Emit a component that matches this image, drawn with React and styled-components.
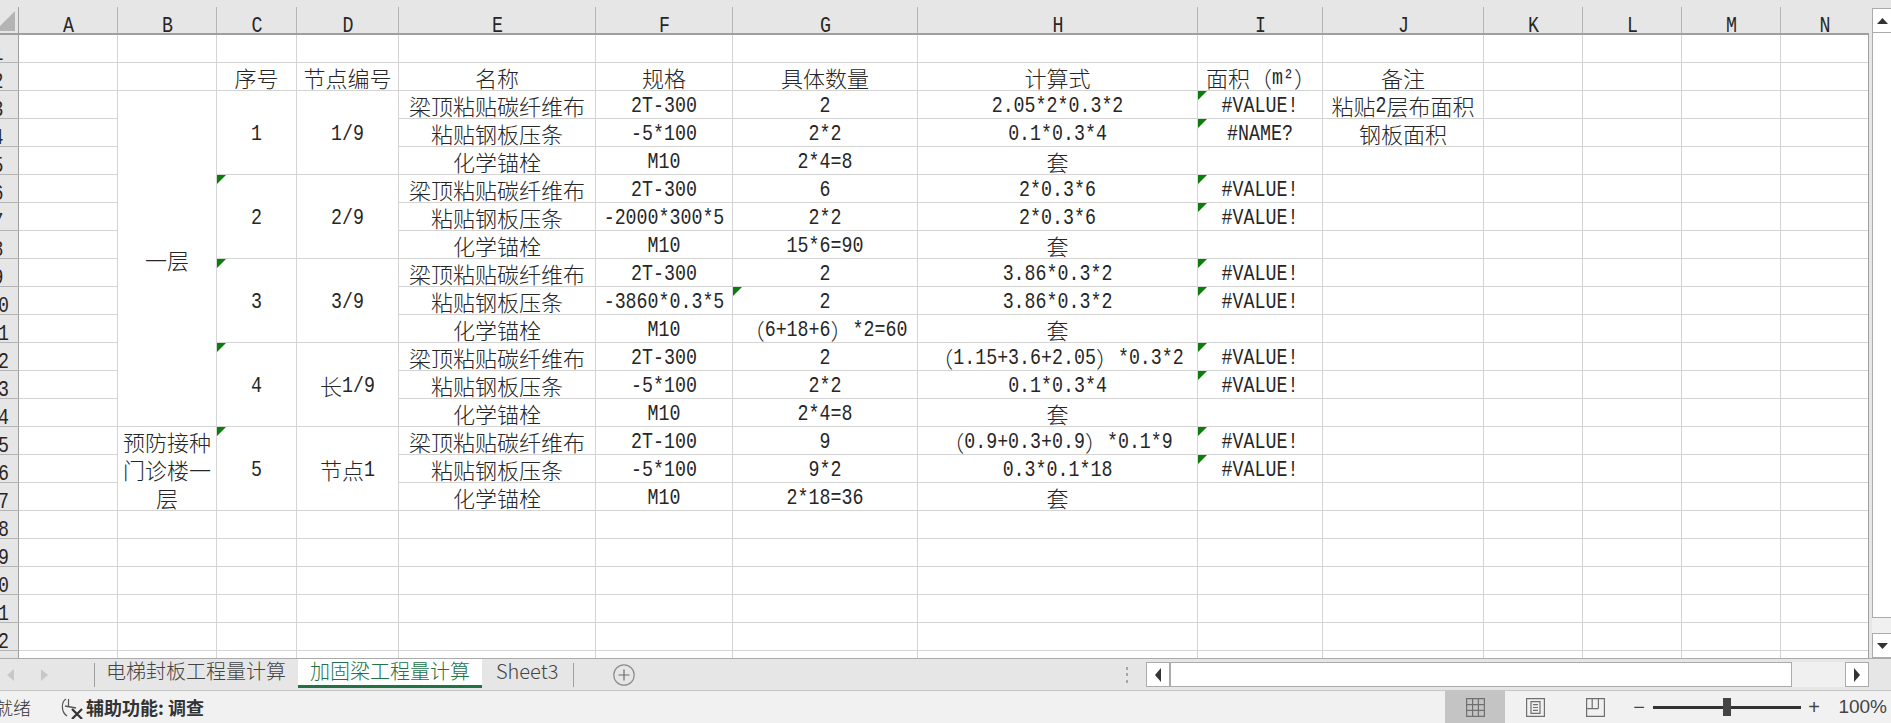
import React from "react";
import styled, { createGlobalStyle } from "styled-components";

const columns = [
	["A", 99], ["B", 99], ["C", 80], ["D", 102], ["E", 197], ["F", 137], ["G", 185],
	["H", 280], ["I", 125], ["J", 161], ["K", 99], ["L", 99], ["M", 99], ["N", 88]
];

// 每个节点三行：规格 具体数量 计算式 面积 备注
const nodes = [
	{ no: "1", code: "1/9", rows: [
		["2T-300", "2", "2.05*2*0.3*2", "#VALUE!", "粘贴2层布面积"],
		["-5*100", "2*2", "0.1*0.3*4", "#NAME?", "钢板面积"],
		["M10", "2*4=8", "套", "", ""]
	] },
	{ no: "2", code: "2/9", mark: true, rows: [
		["2T-300", "6", "2*0.3*6", "#VALUE!", ""],
		["-2000*300*5", "2*2", "2*0.3*6", "#VALUE!", ""],
		["M10", "15*6=90", "套", "", ""]
	] },
	{ no: "3", code: "3/9", mark: true, rows: [
		["2T-300", "2", "3.86*0.3*2", "#VALUE!", ""],
		["-3860*0.3*5", "2", "3.86*0.3*2", "#VALUE!", "", true],
		["M10", "（6+18+6）*2=60", "套", "", ""]
	] },
	{ no: "4", code: "长1/9", mark: true, rows: [
		["2T-300", "2", "（1.15+3.6+2.05）*0.3*2", "#VALUE!", ""],
		["-5*100", "2*2", "0.1*0.3*4", "#VALUE!", ""],
		["M10", "2*4=8", "套", "", ""]
	] },
	{ no: "5", code: "节点1", mark: true, rows: [
		["2T-100", "9", "（0.9+0.3+0.9）*0.1*9", "#VALUE!", ""],
		["-5*100", "9*2", "0.3*0.1*18", "#VALUE!", ""],
		["M10", "2*18=36", "套", "", ""]
	] }
];

const names = ["梁顶粘贴碳纤维布", "粘贴钢板压条", "化学锚栓"];
const tailCols = ["K", "L", "M", "N"];
const header = ["", "", "序号", "节点编号", "名称", "规格", "具体数量", "计算式", "面积（m²）", "备注", "", "", "", ""];

const GlobalStyle = createGlobalStyle`
	html, body {
		margin: 0;
		padding: 0;
		background: #e6e6e6;
		overflow: hidden;
	}
`;

const Page = styled.div`
	width: 1891px;
	height: 723px;
	display: flex;
	flex-direction: column;
	overflow: hidden;
	font-family: "Noto Sans CJK SC", sans-serif;
	color: #262626;
`;

const SheetArea = styled.div`
	height: 658px;
	flex: none;
	display: flex;
	overflow: hidden;
	background: #e6e6e6;
`;

const SheetGrid = styled.div`
	width: 1869px;
	flex: none;
	position: relative;
	display: grid;
	grid-template-columns: 19px ${columns.map(c => c[1] + "px").join(" ")};
	grid-template-rows: 35px repeat(23, 28px);
	background: #fff;
	font-size: 22px;
	font-weight: 300;
	&::after {
		content: "";
		position: absolute;
		top: 35px;
		bottom: 0;
		right: 0;
		width: 1px;
		background: #9f9f9f;
	}
`;

const Corner = styled.div`
	background: #e6e6e6;
	border-bottom: 2px solid #9f9f9f;
	box-sizing: border-box;
	position: relative;
	overflow: hidden;
	&::before {
		content: "";
		position: absolute;
		top: 7px;
		bottom: 0;
		right: 0;
		width: 1px;
		background: #9f9f9f;
	}
	&::after {
		content: "";
		position: absolute;
		right: 4px;
		bottom: 2px;
		border-style: solid;
		border-width: 0 0 20px 20px;
		border-color: transparent transparent #b4b4b4 transparent;
	}
`;

const ColHead = styled.div`
	background: #e6e6e6;
	border-bottom: 2px solid #9f9f9f;
	box-sizing: border-box;
	display: flex;
	align-items: center;
	justify-content: center;
	padding-top: 15px;
	line-height: 18px;
	position: relative;
	&::after {
		content: "";
		position: absolute;
		top: 7px;
		bottom: 0;
		right: 0;
		width: 1px;
		background: #b4b4b4;
	}
	&:nth-child(15)::after {
		display: none;
	}
`;

const RowHead = styled.div`
	background: #e6e6e6;
	border-right: 1px solid #9f9f9f;
	border-bottom: 1px solid #b4b4b4;
	box-sizing: border-box;
	overflow: hidden;
	line-height: 26px;
	white-space: nowrap;
`;

const RowNumber = styled.div`
	width: 40px;
	margin-left: -22px;
	text-align: center;
`;

const Cell = styled.div`
	border-right: 1px solid #d4d4d4;
	border-bottom: 1px solid #d4d4d4;
	box-sizing: border-box;
	position: relative;
	display: flex;
	align-items: center;
	justify-content: ${p => (p.$left ? "flex-start" : "center")};
	padding-left: ${p => (p.$left ? "8px" : "0")};
	padding-top: 1px;
	line-height: 28px;
	text-align: center;
	white-space: ${p => (p.$wrap ? "normal" : "nowrap")};
	grid-row: ${p => (p.$span ? `span ${p.$span}` : "auto")};
`;

const Mark = styled.span`
	position: absolute;
	top: 0;
	left: 0;
	border-style: solid;
	border-width: 9px 9px 0 0;
	border-color: #0a7d0a transparent transparent transparent;
`;

// 宋体的西文是半角等宽，用等宽字体纵向拉高来接近
const Latin = styled.span`
	display: inline-block;
	font-family: "Liberation Mono", monospace;
	font-size: 18.3px;
	font-weight: 400;
	transform: translateY(2.5px) scaleY(1.22);
	transform-origin: 50% 72%;
`;

const VBar = styled.div`
	flex: 1;
	margin-left: 3px;
	margin-top: 8px;
	display: flex;
	flex-direction: column;
	background: #f0f0f0;
`;

const VButton = styled.div`
	height: 25px;
	flex: none;
	display: flex;
	align-items: center;
	justify-content: center;
	background: #fff;
	border: 1px solid #ababab;
	border-right: none;
	box-sizing: border-box;
`;

const VThumb = styled.div`
	height: 585px;
	flex: none;
	background: #fff;
	border: 1px solid #ababab;
	border-top: none;
	border-right: none;
	box-sizing: border-box;
`;

const VTrack = styled.div`
	flex: 1;
`;

const TabBar = styled.div`
	height: 33px;
	flex: none;
	display: flex;
	align-items: flex-start;
	box-sizing: border-box;
	border-top: 1px solid #ababab;
	border-bottom: 1px solid #c6c6c6;
	background: #e6e6e6;
`;

const TabNav = styled.div`
	width: 95px;
	height: 24px;
	margin-top: 4px;
	display: flex;
	align-items: center;
	gap: 27px;
	padding-left: 7px;
	box-sizing: border-box;
	border-right: 1px solid #9f9f9f;
	flex: none;
`;

const Tab = styled.div`
	height: ${p => (p.$active ? "29px" : "24px")};
	margin-top: ${p => (p.$active ? "0" : "4px")};
	box-sizing: border-box;
	padding: ${p => p.$pad};
	width: ${p => p.$width};
	flex: none;
	background: ${p => (p.$active ? "#fff" : "transparent")};
	color: ${p => (p.$active ? "#217346" : "#444")};
	border-bottom: ${p => (p.$active ? "3px solid #217346" : "none")};
	border-right: ${p => (p.$line ? "1px solid #9f9f9f" : "none")};
	font-size: 20px;
	font-weight: 300;
	line-height: ${p => (p.$active ? "24px" : "16px")};
	white-space: nowrap;
`;

const AddSheet = styled.div`
	width: 22px;
	height: 22px;
	margin: 5px 0 0 39px;
	flex: none;
	display: flex;
`;

const HScrollArea = styled.div`
	margin-left: auto;
	width: 774px;
	flex: none;
	height: 25px;
	margin-top: 3px;
	display: flex;
	align-items: center;
`;

const Grip = styled.div`
	width: 20px;
	height: 16px;
	margin-right: 9px;
	flex: none;
	display: flex;
	flex-direction: column;
	justify-content: space-between;
	align-items: center;
`;

const GripDot = styled.span`
	width: 2px;
	height: 3px;
	background: #a6a6a6;
`;

const HButton = styled.div`
	width: 24px;
	height: 25px;
	box-sizing: border-box;
	background: #fff;
	border: 1px solid #ababab;
	display: flex;
	align-items: center;
	justify-content: center;
	flex: none;
`;

const HThumb = styled.div`
	width: 622px;
	height: 25px;
	box-sizing: border-box;
	background: #fff;
	border: 1px solid #ababab;
	flex: none;
`;

const HTrack = styled.div`
	width: 53px;
	height: 25px;
	background: #f0f0f0;
	flex: none;
`;

const StatusBar = styled.div`
	flex: 1;
	display: flex;
	align-items: stretch;
	background: #f1f1f1;
	color: #333;
	font-size: 18px;
`;

const StatusText = styled.div`
	margin-left: -5px;
	width: 66px;
	flex: none;
	font-weight: 300;
	line-height: 32px;
	white-space: nowrap;
`;

const Accessibility = styled.div`
	display: flex;
	align-items: center;
	gap: 3px;
	font-weight: 700;
	white-space: nowrap;
`;

const ViewGroup = styled.div`
	margin-left: auto;
	display: flex;
	align-items: stretch;
`;

const ViewButton = styled.div`
	width: 60px;
	display: flex;
	align-items: center;
	justify-content: center;
	background: ${p => (p.$active ? "#c4c4c4" : "transparent")};
`;

const Zoom = styled.div`
	width: 266px;
	flex: none;
	display: flex;
	align-items: center;
	padding-left: 7px;
	box-sizing: border-box;
`;

const ZoomSign = styled.span`
	width: 14px;
	flex: none;
	text-align: center;
	font-family: "Liberation Sans", sans-serif;
	font-size: 20px;
	line-height: 1;
	color: #444;
`;

const ZoomTrack = styled.div`
	width: 148px;
	height: 3px;
	margin: 0 6px 0 7px;
	flex: none;
	background: #333;
	position: relative;
`;

const ZoomThumb = styled.span`
	position: absolute;
	left: 70px;
	top: -8px;
	width: 8px;
	height: 18px;
	background: #444;
`;

const ZoomLabel = styled.div`
	margin-left: auto;
	padding-right: 4px;
	font-family: "Liberation Sans", sans-serif;
	font-size: 19px;
	color: #444;
`;

// 把文字拆成中文和西文两段
function Txt({ children }){
	const parts = String(children).match(/[\x20-\x7e²]+|[^\x20-\x7e²]+/g) || [];
	return parts.map((part, i) =>
		/^[\x20-\x7e²]/.test(part) ? <Latin key={i}>{part}</Latin> : <span key={i}>{part}</span>
	);
}

function Triangle({ dir }){
	const d = {
		up: "M0 6 L5.5 0 L11 6 Z",
		down: "M0 0 L11 0 L5.5 6 Z",
		left: "M6 0 L6 14 L0 7 Z",
		right: "M0 0 L6 7 L0 14 Z"
	}[dir];
	const w = dir === "up" || dir === "down" ? 11 : 6;
	const h = dir === "up" || dir === "down" ? 6 : 14;
	return <svg width={w} height={h} viewBox={`0 0 ${w} ${h}`}><path d={d} fill="#333" /></svg>;
}

function NavArrow({ right }){
	return (
		<svg width="7" height="12" viewBox="0 0 7 12">
			<path d={right ? "M0 0 L7 6 L0 12 Z" : "M7 0 L0 6 L7 12 Z"} fill="#c8c8c8" />
		</svg>
	);
}

function EmptyCells({ keys }){
	return keys.map(k => <Cell key={k} />);
}

export default function App(){
	const rowHead = n => <RowHead key={"h" + n}><RowNumber><Latin>{n}</Latin></RowNumber></RowHead>;

	const body = [];
	nodes.forEach((node, n) => {
		node.rows.forEach((row, r) => {
			const rowNo = 3 + n * 3 + r;
			body.push(rowHead(rowNo));
			body.push(<Cell key={rowNo + "A"} />);
			if(rowNo === 3) body.push(<Cell key="b1" $span={12}><Txt>一层</Txt></Cell>);
			if(rowNo === 15) body.push(<Cell key="b2" $span={3} $wrap><span>预防接种门诊楼一层</span></Cell>);
			if(r === 0){
				body.push(<Cell key={rowNo + "C"} $span={3}>{node.mark && <Mark />}<Txt>{node.no}</Txt></Cell>);
				body.push(<Cell key={rowNo + "D"} $span={3}><Txt>{node.code}</Txt></Cell>);
			}
			body.push(<Cell key={rowNo + "E"}><Txt>{names[r]}</Txt></Cell>);
			body.push(<Cell key={rowNo + "F"}><Txt>{row[0]}</Txt></Cell>);
			body.push(<Cell key={rowNo + "G"}>{row[5] && <Mark />}<Txt>{row[1]}</Txt></Cell>);
			body.push(<Cell key={rowNo + "H"}><Txt>{row[2]}</Txt></Cell>);
			body.push(<Cell key={rowNo + "I"}>{row[3] && <Mark />}<Txt>{row[3]}</Txt></Cell>);
			body.push(<Cell key={rowNo + "J"}><Txt>{row[4]}</Txt></Cell>);
			body.push(<EmptyCells key={rowNo + "tail"} keys={tailCols} />);
		});
	});

	const blankRows = [18, 19, 20, 21, 22, 23].map(n => (
		<React.Fragment key={n}>
			{rowHead(n)}
			<EmptyCells keys={columns.map(c => c[0])} />
		</React.Fragment>
	));

	return (
		<Page>
			<GlobalStyle />
			<SheetArea>
				<SheetGrid>
					<Corner />
					{columns.map(c => <ColHead key={c[0]}><Latin>{c[0]}</Latin></ColHead>)}
					{rowHead(1)}
					<EmptyCells keys={columns.map(c => c[0])} />
					{rowHead(2)}
					{header.map((h, i) => <Cell key={i} $left={i === 8}><Txt>{h}</Txt></Cell>)}
					{body}
					{blankRows}
				</SheetGrid>
				<VBar>
					<VButton><Triangle dir="up" /></VButton>
					<VThumb />
					<VTrack />
					<VButton><Triangle dir="down" /></VButton>
				</VBar>
			</SheetArea>
			<TabBar>
				<TabNav><NavArrow /><NavArrow right /></TabNav>
				<Tab $width="203px" $pad="0 0 0 11px">电梯封板工程量计算</Tab>
				<Tab $active $width="184px" $pad="0 0 0 12px">加固梁工程量计算</Tab>
				<Tab $line $width="92px" $pad="0 0 0 14px">Sheet3</Tab>
				<AddSheet>
					<svg width="22" height="22" viewBox="0 0 22 22">
						<circle cx="11" cy="11" r="10.2" fill="none" stroke="#8c8c8c" strokeWidth="1.2" />
						<path d="M11 5.5 V16.5 M5.5 11 H16.5" stroke="#6e6e6e" strokeWidth="1.2" />
					</svg>
				</AddSheet>
				<HScrollArea>
					<Grip><GripDot /><GripDot /><GripDot /></Grip>
					<HButton><Triangle dir="left" /></HButton>
					<HThumb />
					<HTrack />
					<HButton><Triangle dir="right" /></HButton>
				</HScrollArea>
			</TabBar>
			<StatusBar>
				<StatusText>就绪</StatusText>
				<Accessibility>
					<svg width="22" height="24" viewBox="0 0 22 24" fill="none" stroke="#555">
						<path d="M7.5 4 V11" strokeWidth="1.2" />
						<path d="M5 4 C0 7 0 17 6 21" strokeWidth="1.2" />
						<path d="M4 11 L15 13" strokeWidth="1.3" />
						<path d="M11 14 L21 24 M21 14 L11 24" strokeWidth="2.2" stroke="#333" />
					</svg>
					<span>辅助功能: 调查</span>
				</Accessibility>
				<ViewGroup>
					<ViewButton $active>
						<svg width="19" height="19" viewBox="0 0 19 19" fill="none" stroke="#707070" strokeWidth="1.2">
							<path d="M.6 .6 H18.4 V18.4 H.6 Z M6.6 .6 V18.4 M12.4 .6 V18.4 M.6 6.6 H18.4 M.6 12.4 H18.4" />
						</svg>
					</ViewButton>
					<ViewButton>
						<svg width="19" height="19" viewBox="0 0 19 19" fill="none" stroke="#707070" strokeWidth="1.2">
							<path d="M.6 .6 H18.4 V18.4 H.6 Z M5 3.6 H14 V15.4 H5 Z M7 6.6 H12 M7 9.5 H12 M7 12.4 H12" />
						</svg>
					</ViewButton>
					<ViewButton>
						<svg width="19" height="19" viewBox="0 0 19 19" fill="none" stroke="#707070" strokeWidth="1.2">
							<path d="M.6 .6 H18.4 V18.4 H.6 Z M6.2 .6 V10.6 M12.4 .6 V10.6 M.6 10.6 H12.4" />
						</svg>
					</ViewButton>
					<Zoom>
						<ZoomSign>−</ZoomSign>
						<ZoomTrack><ZoomThumb /></ZoomTrack>
						<ZoomSign>+</ZoomSign>
						<ZoomLabel>100%</ZoomLabel>
					</Zoom>
				</ViewGroup>
			</StatusBar>
		</Page>
	);
}
